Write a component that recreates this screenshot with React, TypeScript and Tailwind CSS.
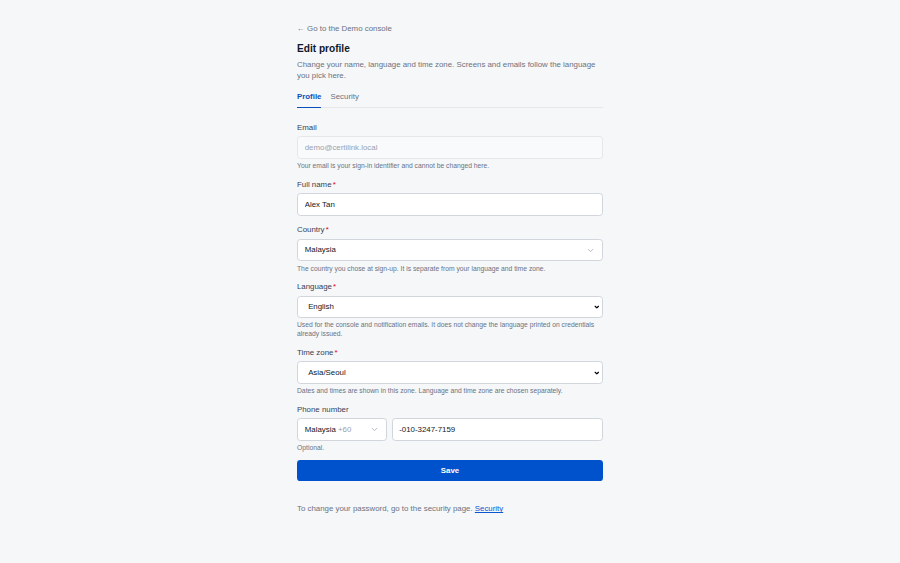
import React, { useState } from "react";

// the form is laid out at normal size and the whole column is zoomed down to fit the 900px shot
const Chevron = ({ className = "" }: { className?: string }) => (
  <svg
    viewBox="0 0 24 24"
    className={className}
    fill="none"
    stroke="currentColor"
    strokeWidth={2}
    strokeLinecap="round"
    strokeLinejoin="round"
  >
    <path d="m6 9 6 6 6-6" />
  </svg>
);

const Label = ({ text, required }: { text: string; required?: boolean }) => (
  <label className="block mb-1.5 text-sm leading-5 font-medium text-gray-700">
    {text}
    {required && <span className="ml-0.5 text-red-600">*</span>}
  </label>
);

const Hint = ({ children }: { children: React.ReactNode }) => (
  <p className="mt-1 text-xs leading-4 text-gray-500">{children}</p>
);

const base = "block h-10 rounded-md border px-3 text-sm outline-none";
const field = `${base} border-gray-300 bg-white text-gray-900`;

// native select look, with a small bold arrow drawn over it
const Select = ({
  value,
  onChange,
  options,
}: {
  value: string;
  onChange: (v: string) => void;
  options: string[];
}) => (
  <div className="relative">
    <select
      value={value}
      onChange={(e) => onChange(e.target.value)}
      className={`${field} w-full appearance-none pl-4.5`}
    >
      {options.map((o) => (
        <option key={o}>{o}</option>
      ))}
    </select>
    <svg
      viewBox="0 0 12 12"
      className="pointer-events-none absolute right-1.5 top-1/2 h-2.5 w-2.5 -translate-y-1/2 text-black"
      fill="none"
      stroke="currentColor"
      strokeWidth={2.6}
      strokeLinecap="round"
      strokeLinejoin="round"
    >
      <path d="M2.5 4.5 6 8l3.5-3.5" />
    </svg>
  </div>
);

export default function App() {
  const [name, setName] = useState("Alex Tan");
  const [phone, setPhone] = useState("-010-3247-7159");
  const [language, setLanguage] = useState("English");
  const [zone, setZone] = useState("Asia/Seoul");

  return (
    <div className="min-h-screen bg-[#f6f7f9] font-['Liberation_Sans',Arial,sans-serif]">
      <div className="[zoom:0.5625]">
        <div className="mx-auto w-full max-w-xl px-4 pt-10 pb-16">
          <a className="block text-sm leading-5 text-gray-500">← Go to the Demo console</a>
          <h1 className="mt-3 text-lg leading-7 font-semibold text-gray-900">Edit profile</h1>
          <p className="mt-1 text-sm leading-normal text-gray-500">
            Change your name, language and time zone. Screens and emails follow the language you
            pick here.
          </p>

          <div className="mt-4 flex gap-4 border-b border-gray-200">
            <button className="-mb-px border-b-2 border-[#0b4fb8] pb-2 text-sm leading-5 font-semibold text-[#0b4fb8]">
              Profile
            </button>
            <button className="-mb-px border-b-2 border-transparent pb-2 text-sm leading-5 text-gray-500">
              Security
            </button>
          </div>

          <form className="mt-6 flex flex-col gap-3.75" onSubmit={(e) => e.preventDefault()}>
            <div>
              <Label text="Email" />
              <input
                disabled
                readOnly
                value="demo@certilink.local"
                className={`${base} w-full border-gray-200 bg-gray-50 text-gray-400`}
              />
              <Hint>Your email is your sign-in identifier and cannot be changed here.</Hint>
            </div>

            <div>
              <Label text="Full name" required />
              <input
                value={name}
                onChange={(e) => setName(e.target.value)}
                className={`${field} w-full`}
              />
            </div>

            <div>
              <Label text="Country" required />
              <button
                type="button"
                className={`${field} flex w-full items-center justify-between text-left`}
              >
                <span>Malaysia</span>
                <Chevron className="h-4 w-4 text-gray-400" />
              </button>
              <Hint>The country you chose at sign-up. It is separate from your language and time zone.</Hint>
            </div>

            <div>
              <Label text="Language" required />
              <Select
                value={language}
                onChange={setLanguage}
                options={["English", "Bahasa Melayu", "Korean"]}
              />
              <Hint>
                Used for the console and notification emails. It does not change the language
                printed on credentials already issued.
              </Hint>
            </div>

            <div>
              <Label text="Time zone" required />
              <Select
                value={zone}
                onChange={setZone}
                options={["Asia/Seoul", "Asia/Kuala_Lumpur"]}
              />
              <Hint>Dates and times are shown in this zone. Language and time zone are chosen separately.</Hint>
            </div>

            <div>
              <Label text="Phone number" />
              <div className="flex gap-2">
                <button
                  type="button"
                  className={`${field} flex w-40 shrink-0 items-center justify-between text-left`}
                >
                  <span>
                    Malaysia <span className="text-gray-400">+60</span>
                  </span>
                  <Chevron className="h-4 w-4 text-gray-400" />
                </button>
                <input
                  value={phone}
                  onChange={(e) => setPhone(e.target.value)}
                  className={`${field} min-w-0 flex-1`}
                />
              </div>
              <Hint>Optional.</Hint>
            </div>

            <button
              type="submit"
              className="h-9 w-full rounded-md bg-[#0052cc] text-sm font-semibold text-white"
            >
              Save
            </button>
          </form>

          <p className="mt-10 text-sm leading-5 text-gray-500">
            To change your password, go to the security page.{" "}
            <a className="text-[#0b57d0] underline">Security</a>
          </p>
        </div>
      </div>
    </div>
  );
}
